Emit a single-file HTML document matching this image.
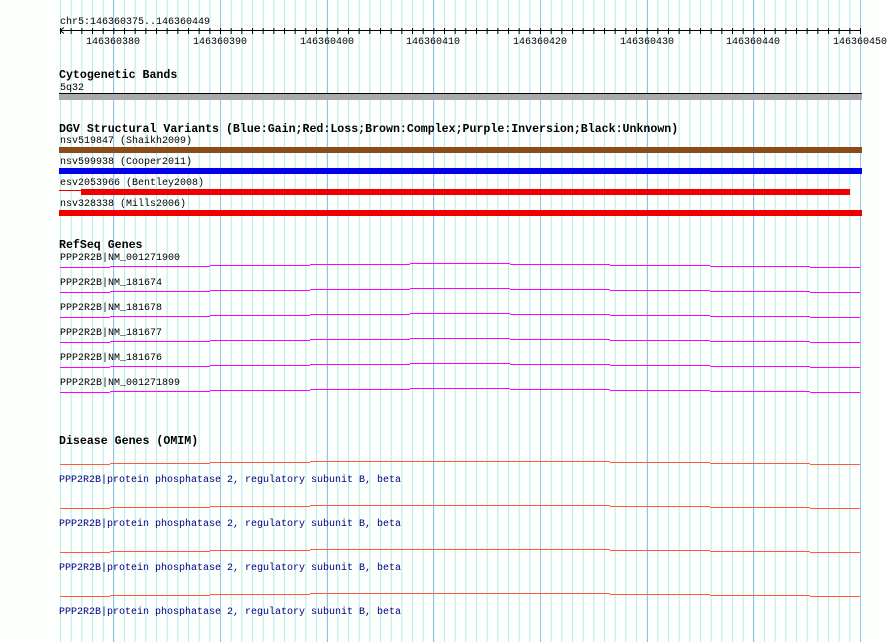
<!DOCTYPE html>
<html><head><meta charset="utf-8"><style>
html,body{margin:0;padding:0;background:#fdfffd;}
svg{display:block;}
text{font-family:"Liberation Mono",monospace;font-size:10px;fill:#000;}
.t{font-weight:bold;font-size:11.6px;}
.d{fill:#000080;}
</style></head><body>
<svg width="890" height="642" viewBox="0 0 890 642" xmlns="http://www.w3.org/2000/svg">
<defs>
<pattern id="g" x="60" y="0" width="10.6667" height="642" patternUnits="userSpaceOnUse">
<rect x="0" y="0" width="1" height="642" fill="#b2ecee"/>
</pattern>
<pattern id="tk" x="60" y="0" width="10.6667" height="642" patternUnits="userSpaceOnUse">
<rect x="0" y="28" width="1" height="6" fill="#000"/>
</pattern>
</defs>
<rect x="0" y="0" width="890" height="642" fill="#fdfffd"/>
<rect x="60" y="0" width="801" height="642" fill="url(#g)"/>
<g fill="#8ec6e6">
<rect x="113" y="0" width="1" height="642"/><rect x="220" y="0" width="1" height="642"/>
<rect x="327" y="0" width="1" height="642"/><rect x="433" y="0" width="1" height="642"/>
<rect x="540" y="0" width="1" height="642"/><rect x="647" y="0" width="1" height="642"/>
<rect x="753" y="0" width="1" height="642"/><rect x="860" y="0" width="1" height="642"/>
</g>
<!-- ruler -->
<text x="60" y="24">chr5:146360375..146360449</text>
<rect x="60" y="30" width="801" height="1" fill="#000"/>
<rect x="60" y="0" width="801" height="40" fill="url(#tk)"/>
<path d="M60 30.5 L64 27.5 M60 30.5 L64 33.5" stroke="#000" stroke-width="1"/>
<g text-anchor="middle">
<text x="113" y="44">146360380</text><text x="220" y="44">146360390</text>
<text x="327" y="44">146360400</text><text x="433" y="44">146360410</text>
<text x="540" y="44">146360420</text><text x="647" y="44">146360430</text>
<text x="753" y="44">146360440</text><text x="860" y="44">146360450</text>
</g>
<!-- cyto -->
<text class="t" x="59" y="78">Cytogenetic Bands</text>
<text x="60" y="90">5q32</text>
<rect x="59" y="93" width="803" height="7" fill="#aaaaaa"/>
<rect x="59" y="93" width="803" height="1" fill="#000"/>
<!-- DGV -->
<text class="t" x="59" y="132">DGV Structural Variants (Blue:Gain;Red:Loss;Brown:Complex;Purple:Inversion;Black:Unknown)</text>
<text x="60" y="143">nsv519847 (Shaikh2009)</text>
<rect x="59" y="147" width="803" height="6" fill="#8b4c1c"/>
<text x="60" y="164">nsv599938 (Cooper2011)</text>
<rect x="59" y="168" width="803" height="6" fill="#0000ee"/>
<text x="60" y="185">esv2053966 (Bentley2008)</text>
<rect x="59" y="190" width="22" height="1" fill="#ee0000"/>
<rect x="81" y="189" width="769" height="6" fill="#ee0000"/>
<text x="60" y="206">nsv328338 (Mills2006)</text>
<rect x="59" y="210" width="803" height="6" fill="#ee0000"/>
<!-- RefSeq -->
<text class="t" x="59" y="248">RefSeq Genes</text>
<g id="gl" fill="none" stroke="#ff00ff" stroke-width="1">
<path d="M60 267.5H110M110 266.5H210M210 265.5H310M310 264.5H410M410 263.5H510M510 264.5H610M610 265.5H710M710 266.5H810M810 267.5H860"/>
</g>
<use href="#gl" y="25"/><use href="#gl" y="50"/><use href="#gl" y="75"/><use href="#gl" y="100"/><use href="#gl" y="125"/>
<text x="60" y="260">PPP2R2B|NM_001271900</text>
<text x="60" y="285">PPP2R2B|NM_181674</text>
<text x="60" y="310">PPP2R2B|NM_181678</text>
<text x="60" y="335">PPP2R2B|NM_181677</text>
<text x="60" y="360">PPP2R2B|NM_181676</text>
<text x="60" y="385">PPP2R2B|NM_001271899</text>
<!-- Disease -->
<text class="t" x="59" y="444">Disease Genes (OMIM)</text>
<g id="dl" fill="none" stroke="#ff5a3c" stroke-width="1">
<path d="M60 464.5H110M110 463.5H210M210 462.5H310M310 461.5H410M410 461.5H510M510 461.5H610M610 462.5H710M710 463.5H810M810 464.5H860"/>
</g>
<use href="#dl" y="44"/><use href="#dl" y="88"/><use href="#dl" y="132"/>
<text class="d" x="59" y="482">PPP2R2B|protein phosphatase 2, regulatory subunit B, beta</text>
<text class="d" x="59" y="526">PPP2R2B|protein phosphatase 2, regulatory subunit B, beta</text>
<text class="d" x="59" y="570">PPP2R2B|protein phosphatase 2, regulatory subunit B, beta</text>
<text class="d" x="59" y="614">PPP2R2B|protein phosphatase 2, regulatory subunit B, beta</text>
</svg>
</body></html>
